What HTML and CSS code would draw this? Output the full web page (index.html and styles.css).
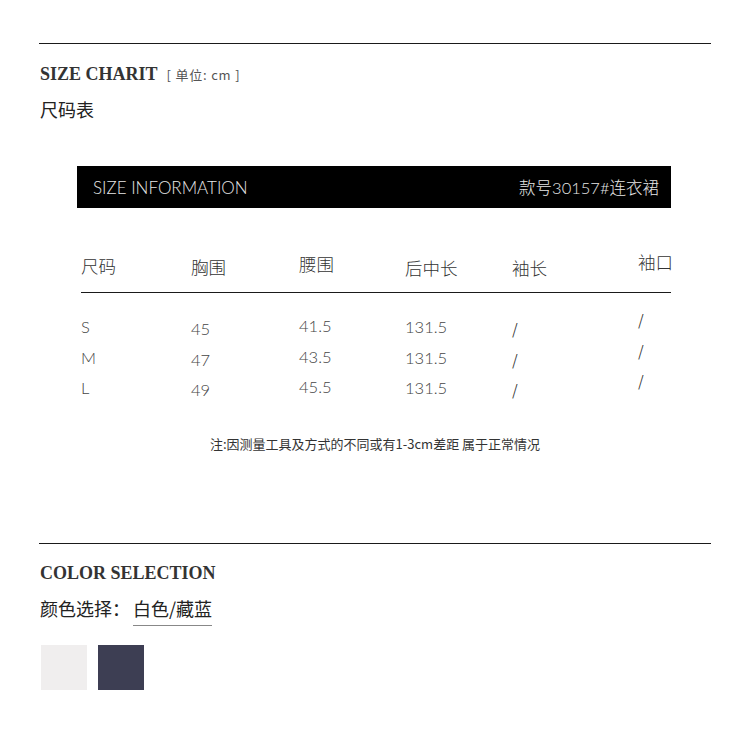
FILE: index.html
```html
<!DOCTYPE html>
<html lang="zh-CN">
<head>
<meta charset="utf-8">
<title>Size Chart</title>
<link rel="stylesheet" href="styles.css">
</head>
<body>
<div class="page">
  <section class="block size">
    <div class="title-row">
      <span class="en-title">SIZE CHARIT</span>
      <span class="unit">[ 单位: cm ]</span>
    </div>
    <div class="cn-title">尺码表</div>

    <div class="bar">
      <span class="bar-left">SIZE INFORMATION</span>
      <span class="bar-right">款号30157#连衣裙</span>
    </div>

    <div class="table">
      <div class="row head">
        <span class="cell c1">尺码</span>
        <span class="cell c2">胸围</span>
        <span class="cell c3">腰围</span>
        <span class="cell c4">后中长</span>
        <span class="cell c5">袖长</span>
        <span class="cell c6">袖口</span>
      </div>
      <div class="body">
        <div class="row">
          <span class="cell c1">S</span>
          <span class="cell c2">45</span>
          <span class="cell c3">41.5</span>
          <span class="cell c4">131.5</span>
          <span class="cell c5 slash">/</span>
          <span class="cell c6 slash">/</span>
        </div>
        <div class="row">
          <span class="cell c1">M</span>
          <span class="cell c2">47</span>
          <span class="cell c3">43.5</span>
          <span class="cell c4">131.5</span>
          <span class="cell c5 slash">/</span>
          <span class="cell c6 slash">/</span>
        </div>
        <div class="row">
          <span class="cell c1">L</span>
          <span class="cell c2">49</span>
          <span class="cell c3">45.5</span>
          <span class="cell c4">131.5</span>
          <span class="cell c5 slash">/</span>
          <span class="cell c6 slash">/</span>
        </div>
      </div>
    </div>

    <p class="note">注:因测量工具及方式的不同或有1-3cm差距 属于正常情况</p>
  </section>

  <section class="block color">
    <div class="en-title color-title">COLOR SELECTION</div>
    <div class="color-row">
      <span class="color-label">颜色选择：</span>
      <span class="color-value">白色/藏蓝</span>
    </div>
    <div class="swatches">
      <span class="swatch white"></span>
      <span class="swatch navy"></span>
    </div>
  </section>
</div>
</body>
</html>
```

FILE: styles.css
```css
* { box-sizing: border-box; }
html, body { margin: 0; padding: 0; background: #fff; }
body {
  font-family: Lato, "Noto Sans CJK SC", sans-serif;
  color: #333;
}
.page {
  padding-top: 43px;
  width: 750px;
  height: 747px;
  overflow: hidden;
}
.block {
  margin: 0 39px;
  border-top: 1px solid #1a1a1a;
}
.title-row {
  margin-top: 18px;
  display: flex;
  align-items: center;
  height: 24px;
  padding-left: 1px;
}
.en-title {
  font-family: "Liberation Serif", serif;
  font-weight: bold;
  font-size: 18px;
  line-height: 24px;
  color: #333;
}
.unit {
  margin-left: 9px;
  font-family: "Noto Sans CJK SC", sans-serif;
  font-size: 13px;
  letter-spacing: 0.8px;
  color: #555;
  padding-top: 1px;
}
.cn-title {
  margin-top: 11px;
  font-family: "Noto Sans CJK SC", sans-serif;
  font-size: 18px;
  line-height: 24px;
  color: #222;
  padding-left: 1px;
}
.bar {
  margin: 45px 40px 0 38px;
  height: 42px;
  background: #000;
  display: flex;
  align-items: center;
  justify-content: space-between;
  padding: 0 12px 0 16px;
}
.bar-left {
  font-family: Lato, sans-serif;
  font-weight: 300;
  font-size: 17px;
  color: #e6e6e6;
}
.bar-right {
  font-family: Lato, "Noto Sans CJK SC", sans-serif;
  font-weight: 300;
  font-size: 16.5px;
  color: #e6e6e6;
}
.table {
  margin: 46px 40px 0 42px;
}
.row {
  display: grid;
  grid-template-columns: 110px 108px 106px 107px 126px 1fr;
  align-items: start;
}
.cell {
  display: block;
  white-space: nowrap;
}
.head {
  height: 39px;
  border-bottom: 1px solid #1a1a1a;
  font-family: "Noto Sans CJK SC", sans-serif;
  font-weight: 300;
  font-size: 17.5px;
  line-height: 24px;
  color: #333;
}
.body {
  padding-top: 18px;
}
.body .row {
  height: 30.5px;
  font-family: Lato, sans-serif;
  font-weight: 300;
  font-size: 16.5px;
  line-height: 30px;
  color: #444;
}
.body .slash {
  font-family: "DejaVu Sans", sans-serif;
  font-weight: 200;
  font-size: 17px;
  color: #333;
}
.head .c1 { padding-top: 0; }
.head .c2 { padding-top: 1px; }
.head .c3 { margin-top: -2px; }
.head .c4 { padding-top: 2px; }
.head .c5 { padding-top: 2px; }
.head .c6 { margin-top: -4px; }
.body .c1 { padding-top: 1px; }
.body .c2 { padding-top: 3px; }
.body .c3 { margin-top: 0; }
.body .c4 { padding-top: 1px; }
.body .c5 { padding-top: 4px; }
.body .c6 { margin-top: -5px; }
.note {
  margin: 32.5px 0 0;
  text-align: center;
  font-family: "Noto Sans CJK SC", sans-serif;
  font-size: 13px;
  line-height: 18px;
  color: #333;
}
.block.size {
  height: 500px;
}
.color-title {
  margin-top: 17px;
  padding-left: 1px;
}
.color-row {
  margin-top: 11px;
  display: flex;
  align-items: flex-start;
  font-family: "Noto Sans CJK SC", sans-serif;
  font-size: 18px;
  line-height: 24px;
  color: #222;
  padding-left: 1px;
}
.color-value {
  margin-left: 3px;
  padding-bottom: 5px;
  border-bottom: 1px solid #888;
}
.swatches {
  margin-top: 19px;
  display: flex;
  gap: 11px;
  padding-left: 2px;
}
.swatch {
  display: block;
  width: 46px;
  height: 45px;
}
.white { background: #f0eeee; }
.navy { background: #3d3e53; }
```
